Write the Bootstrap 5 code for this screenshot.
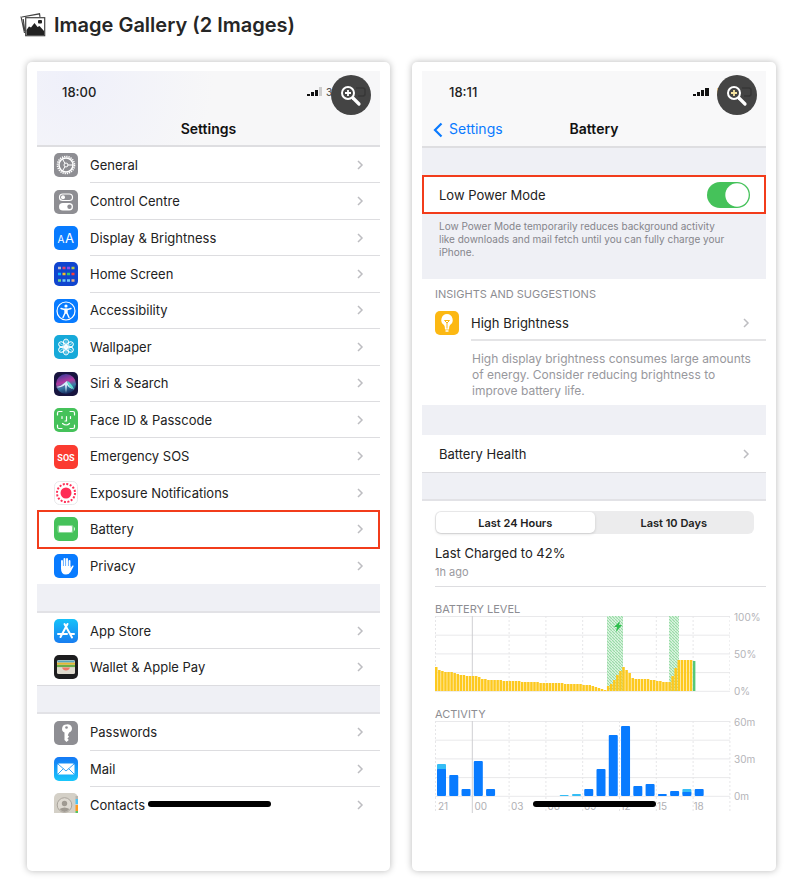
<!DOCTYPE html>
<html lang="en">
<head>
<meta charset="utf-8">
<meta name="viewport" content="width=device-width, initial-scale=1">
<title>Image Gallery</title>
<link href="https://cdn.jsdelivr.net/npm/bootstrap@5.3.0/dist/css/bootstrap.min.css" rel="stylesheet">
<style>
body{font-family:Inter,"Liberation Sans",sans-serif;background:#fff;color:#222}
.gallery-head{padding:8px 20px 0;height:37px}
.gallery-head h1{font-size:20px;line-height:34px;font-weight:600;color:#262626}
.gallery-grid{display:grid;grid-template-columns:1fr 1fr;gap:22px;padding:25px 24px 20px 27px}
.shot{border-radius:5px;background:#fff;box-shadow:0 0 7px rgba(0,0,0,.28);padding:9px 10px 58px}
.phone{font-size:13px;line-height:18px}
.phone-head{height:77px;background:#f8f8f9;border-bottom:2px solid #dedee1}
.phone-head.tinted{height:76px;background:radial-gradient(circle at 10% 10%,#eff0fa,#f7f7f8 45%)}
.status{height:42px;padding:0 52px 0 25px;font-weight:500}
.status.late{padding-left:27px}
.title-row{height:32px;display:grid;grid-template-columns:1fr auto 1fr;font-size:14px;font-weight:600;color:#111}
.title-row a{color:#0a7aff;font-weight:400;text-decoration:none;padding-left:11px}
.zoom-btn{top:4px;right:9px;width:40px;height:40px;background:#444;border:0;padding:0}
.rows{min-height:437px}
.rows.pair{min-height:72px}
.rows.tail{height:99px;min-height:0;overflow:hidden}
.rows.tail .item{flex:0 0 36px}
.rows.tail .item:first-child{flex-basis:37px}
.item{padding-left:17px;color:#222;text-decoration:none;position:relative}
.item .line{margin-left:12px;padding-right:16px;border-bottom:1px solid #dddde0;align-self:stretch}
.item:last-child .line{border-bottom:0}
.app{width:24px;height:24px;flex:none}
.gap-band{background:#eff0f5;height:29px;border-bottom:2px solid #e2e2e6}
.gap-band.top-line{border-top:1px solid #dcdce0}
.gap-band.plain{height:27px;border:0}
.gap-band.tall{height:30px;border:0}
.marked::after{content:"";position:absolute;inset:-1px 0;border:2px solid #f23c1b}
.home-bar{height:6px;width:123px;border-radius:3px;background:#000;bottom:6px;left:111px}
.power{height:39px;border:2px solid #f23c1b;padding:0 14px 0 15px}
.form-switch .form-check-input.power-switch{width:43px;height:26px;margin:0;border:0;background-color:#45c25a;box-shadow:none;
 background-image:url("data:image/svg+xml,%3csvg xmlns='http://www.w3.org/2000/svg' viewBox='-4 -4 8 8'%3e%3ccircle r='3.6' fill='%23fff'/%3e%3c/svg%3e")}
.note{background:#eff0f5;height:65px;padding:6px 17px 0;font-size:10px;line-height:13px;color:#85858b}
.caption-txt{font-size:11px;line-height:14px;color:#8d8d92}
.insight{height:126px;padding:8px 0 0 13px}
.insight .item{padding-left:0;height:40px}
.insight .app{margin-top:4px}
.insight .item .line{padding-top:6px;border-bottom:2px solid #e4e4e6}
.advice{font-size:12px;line-height:16px;color:#98989d;margin:10px 0 0 37px}
.health{height:37px;padding:0 16px 0 17px}
.seg{background:#ececed;border-radius:6px;height:23px;width:calc(100% - 12px);padding:1px}
.seg .btn{font-size:11px;line-height:14px;font-weight:600;padding:0;border:0;border-radius:5px;color:#222}
.seg .btn.active{background:#fff;color:#222;box-shadow:0 1px 3px rgba(0,0,0,.15)}
.usage{padding:10px 0 0 13px;height:312px}
.charged{height:53px;padding-top:10px;border-bottom:1px solid #dddde0}
.ago{font-size:11px;line-height:20px;color:#99999e}
.plot-title{margin-top:15px}
.plot{height:76px}
.plot svg{flex:1 1 0;min-width:0;height:76px}
.scale{width:36px;padding-left:4px;margin:-5px 0;font-size:10px;line-height:12px;color:#b4b4b8}
.hours{display:grid;grid-template-columns:repeat(8,1fr);width:calc(100% - 36px);font-size:10px;line-height:18px;color:#b0b0b4;padding-left:3px}
</style>
</head>
<body>
<header class="gallery-head d-flex">
<svg class="flex-shrink-0 me-2 mt-1" width="26" height="26" viewBox="0 0 26 26" aria-hidden="true"><path d="M4.500 21 1 4.500M2 5l17.500-3.200.5 3M3.200 7l1.600 12" fill="none" stroke="#444" stroke-width="1.200"/><rect x="5.700" y="5.700" width="19" height="18" fill="#fff" stroke="#444" stroke-width="1.200"/><path d="M6.500 23v-5l2.500-3.500 2 1 3.500-4.500 3 4 2-1 4.500 5v4z" fill="#222"/><rect x="18" y="8" width="4" height="3.500" rx="1" fill="#222"/></svg>
<h1 class="m-0">Image Gallery (2 Images)</h1>
</header>
<main class="gallery-grid">
<article class="shot">
<div class="phone position-relative">
<div class="phone-head tinted">
<div class="status d-flex align-items-center justify-content-between"><span>18:00</span><svg class="overflow-visible" width="12" height="10" viewBox="0 0 12 10" aria-hidden="true"><path d="M-9 7h3v2h-3zM-5 5h3v4h-3zM-1 3h3v6h-3z" fill="#111"/><path d="M3 0h3v9H3z" fill="#ccc"/><text x="10" y="9" font-size="10" fill="#555">3G</text></svg></div>
<div class="title-row align-items-center"><span></span><span>Settings</span><span></span></div>
</div>
<nav class="rows d-flex flex-column" aria-label="Settings">
<a href="#" class="item d-flex flex-fill align-items-center"><svg class="app" viewBox="0 0 24 24"><rect width="24" height="24" rx="5" fill="#8e8e93"/><circle cx="12" cy="12" r="8.500" fill="none" stroke="#fff" stroke-width="1.600" stroke-dasharray="1.300 0.925"/><circle cx="12" cy="12" r="7" fill="none" stroke="#fff" stroke-width="1.500"/><circle cx="12" cy="12" r="2" fill="none" stroke="#fff"/><path d="M13.500 12H19M11 10.500 8.500 6M11 13.500 8.500 18" stroke="#fff"/></svg><span class="line d-flex flex-fill align-items-center justify-content-between">General<svg width="7" height="10" viewBox="0 0 7 10"><path d="m1 1 4 4-4 4" fill="none" stroke="#bdbdc1" stroke-width="1.500"/></svg></span></a>
<a href="#" class="item d-flex flex-fill align-items-center"><svg class="app" viewBox="0 0 24 24"><rect width="24" height="24" rx="5" fill="#8e8e93"/><rect x="5.500" y="4" width="13" height="6.500" rx="3.250" fill="none" stroke="#fff" stroke-width="1.200"/><circle cx="9" cy="7.200" r="2" fill="#fff"/><rect x="5" y="13" width="14" height="7.500" rx="3.750" fill="#fff"/><circle cx="15.500" cy="16.700" r="2.200" fill="#8e8e93"/></svg><span class="line d-flex flex-fill align-items-center justify-content-between">Control Centre<svg width="7" height="10" viewBox="0 0 7 10"><path d="m1 1 4 4-4 4" fill="none" stroke="#bdbdc1" stroke-width="1.500"/></svg></span></a>
<a href="#" class="item d-flex flex-fill align-items-center"><svg class="app" viewBox="0 0 24 24"><rect width="24" height="24" rx="5" fill="#087bff"/><text x="3.500" y="17" font-size="10" fill="#fff">A</text><text x="11" y="17" font-size="13" fill="#fff">A</text></svg><span class="line d-flex flex-fill align-items-center justify-content-between">Display &amp; Brightness<svg width="7" height="10" viewBox="0 0 7 10"><path d="m1 1 4 4-4 4" fill="none" stroke="#bdbdc1" stroke-width="1.500"/></svg></span></a>
<a href="#" class="item d-flex flex-fill align-items-center"><svg class="app" viewBox="0 0 24 24"><rect width="24" height="24" rx="5" fill="#1045cf"/><g stroke-width="2.500"><path d="M4 6h3" stroke="#bbc"/><path d="M8.500 6h3" stroke="#e4456c"/><path d="M13 6h3" stroke="#8b50e8"/><path d="M17.500 6h3" stroke="#b2c84a"/><path d="M4 12h3" stroke="#12b6fa"/><path d="M8.500 12h3" stroke="#f7bd22"/><path d="M13 12h3" stroke="#35c977"/><path d="M17.500 12h3" stroke="#ff3d38"/><path d="M4 18.500h3" stroke="#71d787"/><path d="M8.500 18.500h3M13 18.500h3" stroke="#72c9f8"/><path d="M17.500 18.500h3" stroke="#e7b086"/></g></svg><span class="line d-flex flex-fill align-items-center justify-content-between">Home Screen<svg width="7" height="10" viewBox="0 0 7 10"><path d="m1 1 4 4-4 4" fill="none" stroke="#bdbdc1" stroke-width="1.500"/></svg></span></a>
<a href="#" class="item d-flex flex-fill align-items-center"><svg class="app" viewBox="0 0 24 24"><rect width="24" height="24" rx="5" fill="#087bff"/><circle cx="12" cy="12" r="9" fill="none" stroke="#fff" stroke-width="1.200"/><circle cx="12" cy="7" r="1.600" fill="#fff"/><path d="M7 9.500l3.500 1h3l3.500-1M11 10v4l-2 4.500M13 10v4l2 4.500M12 10v4" fill="none" stroke="#fff" stroke-width="1.400" stroke-linecap="round"/></svg><span class="line d-flex flex-fill align-items-center justify-content-between">Accessibility<svg width="7" height="10" viewBox="0 0 7 10"><path d="m1 1 4 4-4 4" fill="none" stroke="#bdbdc1" stroke-width="1.500"/></svg></span></a>
<a href="#" class="item d-flex flex-fill align-items-center"><svg class="app" viewBox="0 0 24 24"><rect width="24" height="24" rx="5" fill="#16a9d9"/><g fill="none" stroke="#fff"><ellipse cx="12" cy="7.500" rx="2.600" ry="3.500"/><ellipse cx="12" cy="7.500" rx="2.600" ry="3.500" transform="rotate(60 12 12)"/><ellipse cx="12" cy="7.500" rx="2.600" ry="3.500" transform="rotate(120 12 12)"/><ellipse cx="12" cy="7.500" rx="2.600" ry="3.500" transform="rotate(180 12 12)"/><ellipse cx="12" cy="7.500" rx="2.600" ry="3.500" transform="rotate(240 12 12)"/><ellipse cx="12" cy="7.500" rx="2.600" ry="3.500" transform="rotate(300 12 12)"/><circle cx="12" cy="12" r="1.500"/><path d="M12 5v14M6 8.500l12 7M6 15.500l12-7" stroke-width=".6"/></g></svg><span class="line d-flex flex-fill align-items-center justify-content-between">Wallpaper<svg width="7" height="10" viewBox="0 0 7 10"><path d="m1 1 4 4-4 4" fill="none" stroke="#bdbdc1" stroke-width="1.500"/></svg></span></a>
<a href="#" class="item d-flex flex-fill align-items-center"><svg class="app" viewBox="0 0 24 24"><defs><linearGradient id="orb" x1=".3" y1="0" x2=".6" y2="1"><stop stop-color="#3c3b9c"/><stop offset=".4" stop-color="#b43aa0"/><stop offset=".65" stop-color="#387ba5"/><stop offset="1" stop-color="#122055"/></linearGradient></defs><rect width="24" height="24" rx="5" fill="#17143f"/><circle cx="12" cy="12" r="10" fill="url(#orb)"/><path d="M2 15c5 0 8-4 11-6 1 4 4 8 9 9-4-1-7-2-9-5l-1 8-1-8c-3 2-6 3-9 2z" fill="#d6eefa"/><path d="M13 9c3 1 5 4 7 8-4-1-6-4-7-8z" fill="#5de0d1"/></svg><span class="line d-flex flex-fill align-items-center justify-content-between">Siri &amp; Search<svg width="7" height="10" viewBox="0 0 7 10"><path d="m1 1 4 4-4 4" fill="none" stroke="#bdbdc1" stroke-width="1.500"/></svg></span></a>
<a href="#" class="item d-flex flex-fill align-items-center"><svg class="app" viewBox="0 0 24 24"><rect width="24" height="24" rx="5" fill="#45c25a"/><path d="M3.500 7V5q0-1.500 1.500-1.500h3M16 3.500h3q1.500 0 1.500 1.500v2M20.500 17v2q0 1.500-1.500 1.500h-3M8 20.500H5q-1.500 0-1.500-1.500v-2M8 8.500v2M16.500 8.500v2M12.500 8.500v4.500h-1.500M8.500 15.500q4 3 7 0" fill="none" stroke="#fff" stroke-width="1.200" stroke-linecap="round"/></svg><span class="line d-flex flex-fill align-items-center justify-content-between">Face ID &amp; Passcode<svg width="7" height="10" viewBox="0 0 7 10"><path d="m1 1 4 4-4 4" fill="none" stroke="#bdbdc1" stroke-width="1.500"/></svg></span></a>
<a href="#" class="item d-flex flex-fill align-items-center"><svg class="app" viewBox="0 0 24 24"><rect width="24" height="24" rx="5" fill="#fb3b30"/><text x="12" y="15.500" text-anchor="middle" font-family="Roboto" font-size="9" font-weight="700" fill="#fff">SOS</text></svg><span class="line d-flex flex-fill align-items-center justify-content-between">Emergency SOS<svg width="7" height="10" viewBox="0 0 7 10"><path d="m1 1 4 4-4 4" fill="none" stroke="#bdbdc1" stroke-width="1.500"/></svg></span></a>
<a href="#" class="item d-flex flex-fill align-items-center"><svg class="app" viewBox="0 0 24 24"><rect x=".5" y=".5" width="23" height="23" rx="5" fill="#fff" stroke="#e8e8ea"/><circle cx="12" cy="12" r="5.500" fill="#ff2d55"/><circle cx="12" cy="12" r="9" fill="none" stroke="#ff2d55" stroke-width="2" stroke-dasharray="2 1.534"/></svg><span class="line d-flex flex-fill align-items-center justify-content-between">Exposure Notifications<svg width="7" height="10" viewBox="0 0 7 10"><path d="m1 1 4 4-4 4" fill="none" stroke="#bdbdc1" stroke-width="1.500"/></svg></span></a>
<a href="#" class="item marked d-flex flex-fill align-items-center"><svg class="app" viewBox="0 0 24 24"><rect width="24" height="24" rx="5" fill="#45c25a"/><rect x="3.500" y="8" width="16" height="8" rx="2" fill="#8bd998"/><rect x="5" y="9" width="13" height="6" rx="1" fill="#fff"/><path d="M20.500 10.500v3" stroke="#d0f0d5"/></svg><span class="line d-flex flex-fill align-items-center justify-content-between">Battery<svg width="7" height="10" viewBox="0 0 7 10"><path d="m1 1 4 4-4 4" fill="none" stroke="#bdbdc1" stroke-width="1.500"/></svg></span></a>
<a href="#" class="item d-flex flex-fill align-items-center"><svg class="app" viewBox="0 0 24 24"><rect width="24" height="24" rx="5" fill="#087bff"/><path d="M8 13V7M10.500 12V5M13 12V5M15.500 13V7" stroke="#fff" stroke-width="1.900" stroke-linecap="round"/><path d="M7 12h9.500v2l2-2.500q1.500-.5 1 1L16.500 18q-1.500 2.500-4.500 2.500-5 0-5-6z" fill="#fff"/></svg><span class="line d-flex flex-fill align-items-center justify-content-between">Privacy<svg width="7" height="10" viewBox="0 0 7 10"><path d="m1 1 4 4-4 4" fill="none" stroke="#bdbdc1" stroke-width="1.500"/></svg></span></a>
</nav>
<div class="gap-band"></div>
<nav class="rows pair d-flex flex-column" aria-label="Stores">
<a href="#" class="item d-flex flex-fill align-items-center"><svg class="app" viewBox="0 0 24 24"><defs><linearGradient id="sky" x2="0" y2="1"><stop stop-color="#16c2fa"/><stop offset="1" stop-color="#187df0"/></linearGradient></defs><rect width="24" height="24" rx="5" fill="url(#sky)"/><path d="M13.500 5 6.500 18M10.500 5l7.500 13.500M4 15h9M16 15h4" fill="none" stroke="#fff" stroke-width="2" stroke-linecap="round"/></svg><span class="line d-flex flex-fill align-items-center justify-content-between">App Store<svg width="7" height="10" viewBox="0 0 7 10"><path d="m1 1 4 4-4 4" fill="none" stroke="#bdbdc1" stroke-width="1.500"/></svg></span></a>
<a href="#" class="item d-flex flex-fill align-items-center"><svg class="app" viewBox="0 0 24 24"><rect width="24" height="24" rx="5" fill="#1d1d1f"/><rect x="3" y="5" width="18" height="14" rx="1.500" fill="#dedace"/><path d="M3.500 6.500h17" stroke="#58a7bd" stroke-width="2"/><path d="M3 8.700h18" stroke="#e4b734" stroke-width="2"/><path d="M3 11h18" stroke="#69ad4b" stroke-width="2.200"/><path d="M8 12.500h8q-1 3-4 3t-4-3z" fill="#ee7767"/></svg><span class="line d-flex flex-fill align-items-center justify-content-between">Wallet &amp; Apple Pay<svg width="7" height="10" viewBox="0 0 7 10"><path d="m1 1 4 4-4 4" fill="none" stroke="#bdbdc1" stroke-width="1.500"/></svg></span></a>
</nav>
<div class="gap-band top-line"></div>
<nav class="rows tail d-flex flex-column" aria-label="Accounts">
<a href="#" class="item d-flex align-items-center"><svg class="app" viewBox="0 0 24 24"><rect width="24" height="24" rx="5" fill="#8e8e93"/><path d="M12.500 3.500a4.200 4.200 0 0 0-2 8v7.500l2 2 2.300-2-1.400-1.500 1.700-1.700-1.300-1.500 1.300-2.800a4.200 4.200 0 0 0-2.600-8z" fill="#fff"/><circle cx="12.500" cy="6.500" r="1.300" fill="#8e8e93"/></svg><span class="line d-flex flex-fill align-items-center justify-content-between">Passwords<svg width="7" height="10" viewBox="0 0 7 10"><path d="m1 1 4 4-4 4" fill="none" stroke="#bdbdc1" stroke-width="1.500"/></svg></span></a>
<a href="#" class="item d-flex align-items-center"><svg class="app" viewBox="0 0 24 24"><defs><linearGradient id="post" x2="0" y2="1"><stop stop-color="#1478f5"/><stop offset="1" stop-color="#19c7fb"/></linearGradient></defs><rect width="24" height="24" rx="5" fill="url(#post)"/><rect x="3.500" y="6.500" width="17" height="11" rx="1.500" fill="#fff"/><path d="m4 7 8 7 8-7M4 17l5.500-5.500M20 17l-5.500-5.500" fill="none" stroke="#38a5f6"/></svg><span class="line d-flex flex-fill align-items-center justify-content-between">Mail<svg width="7" height="10" viewBox="0 0 7 10"><path d="m1 1 4 4-4 4" fill="none" stroke="#bdbdc1" stroke-width="1.500"/></svg></span></a>
<a href="#" class="item d-flex align-items-center"><svg class="app" viewBox="0 0 24 24"><rect width="24" height="24" rx="5" fill="#d4d0c7"/><path d="M21.500 3h2.500v3h-2.500z" fill="#b8b5ae"/><path d="M21.500 6H24v5h-2.500z" fill="#4cc4f5"/><path d="M21.500 12H24v6h-2.500z" fill="#ff9a21"/><path d="M21.500 18H24v3h-2.500z" fill="#5ac45f"/><circle cx="10.500" cy="12" r="7.300" fill="#dedad2" stroke="#aaa59d"/><circle cx="10.500" cy="10.500" r="2.700" fill="#9f9a92"/><path d="M5.500 16q5-3 10 0-5 6-10 0z" fill="#9f9a92"/></svg><span class="line d-flex flex-fill align-items-center justify-content-between">Contacts<svg width="7" height="10" viewBox="0 0 7 10"><path d="m1 1 4 4-4 4" fill="none" stroke="#bdbdc1" stroke-width="1.500"/></svg></span></a>
</nav>
<div class="home-bar position-absolute"></div>
<button type="button" class="zoom-btn rounded-circle position-absolute" aria-label="Enlarge settings picture"><svg width="40" height="40" viewBox="0 0 40 40"><path d="M25 13h7q2 0 2 2v4q0 2-2 2h-5" fill="none" stroke="#373737" stroke-width="1.500"/><circle cx="17" cy="18" r="6" fill="none" stroke="#fff" stroke-width="2"/><path d="m22 23 6 6" stroke="#fff" stroke-width="3.200" stroke-linecap="round"/><path d="M17 15v6M14 18h6" stroke="#fff" stroke-width="1.800"/></svg></button>
</div>
</article>
<article class="shot">
<div class="phone position-relative">
<div class="phone-head">
<div class="status late d-flex align-items-center justify-content-between"><span>18:11</span><svg class="overflow-visible" width="12" height="10" viewBox="0 0 12 10" aria-hidden="true"><path d="M-9 7h3v2h-3zM-5 5h3v4h-3zM-1 3h3v6h-3zM3 1h4v8H3z" fill="#111"/><text x="15" y="9" font-size="10" fill="#333">E</text></svg></div>
<div class="title-row align-items-center"><a href="#"><svg class="me-1" width="12" height="16" viewBox="0 0 12 16"><path d="M8.500 1.500 2 8l6.500 6.500" fill="none" stroke="#0a7aff" stroke-width="2.200"/></svg>Settings</a><span>Battery</span><span></span></div>
</div>
<div class="gap-band plain"></div>
<div class="power d-flex align-items-center justify-content-between"><label for="lpm">Low Power Mode</label><div class="form-check form-switch m-0 p-0 d-flex"><input class="form-check-input power-switch" type="checkbox" role="switch" id="lpm" checked></div></div>
<p class="note m-0">Low Power Mode temporarily reduces background activity<br>like downloads and mail fetch until you can fully charge your<br>iPhone.</p>
<section class="insight">
<div class="caption-txt">INSIGHTS AND SUGGESTIONS</div>
<div><a href="#" class="item d-flex align-items-center"><svg class="app" viewBox="0 0 24 24"><rect width="24" height="24" rx="5" fill="#fcb813"/><path d="M12 3a6 6 0 0 1 3 11q-1 1-1 4.500h-4Q10 15 9 14a6 6 0 0 1 3-11z" fill="#fff"/><path d="M10.500 20h3" stroke="#fff" stroke-width="1.500"/><path d="M9.500 9.500h5L12 12zm2.500 2v6" fill="none" stroke="#fcb813"/></svg><span class="line d-flex flex-fill align-items-center justify-content-between">High Brightness<svg width="7" height="10" viewBox="0 0 7 10"><path d="m1 1 4 4-4 4" fill="none" stroke="#bdbdc1" stroke-width="1.500"/></svg></span></a>
<p class="advice">High display brightness consumes large amounts<br>of energy. Consider reducing brightness to<br>improve battery life.</p></div>
</section>
<div class="gap-band tall"></div>
<a href="#" class="health d-flex align-items-center justify-content-between text-reset text-decoration-none">Battery Health<svg width="7" height="10" viewBox="0 0 7 10"><path d="m1 1 4 4-4 4" fill="none" stroke="#bdbdc1" stroke-width="1.500"/></svg></a>
<div class="gap-band top-line"></div>
<section class="usage">
<div class="seg d-flex" role="group" aria-label="Period"><button type="button" class="btn active flex-fill w-50">Last 24 Hours</button><button type="button" class="btn flex-fill w-50">Last 10 Days</button></div>
<div class="charged"><div>Last Charged to 42%</div><div class="ago">1h ago</div></div>
<div class="caption-txt plot-title">BATTERY LEVEL</div>
<div class="plot d-flex"><svg id="level" viewBox="0 0 295 76" preserveAspectRatio="none" role="img" aria-label="Battery level"></svg><div class="scale d-flex flex-column justify-content-between"><span>100%</span><span>50%</span><span>0%</span></div></div>
<div class="caption-txt plot-title">ACTIVITY</div>
<div class="plot d-flex"><svg id="activity" class="overflow-visible" viewBox="0 0 295 76" preserveAspectRatio="none" role="img" aria-label="Activity"></svg><div class="scale d-flex flex-column justify-content-between"><span>60m</span><span>30m</span><span>0m</span></div></div>
<div class="hours"><span>21</span><span>00</span><span>03</span><span>06</span><span>09</span><span>12</span><span>15</span><span>18</span></div>
</section>
<div class="home-bar position-absolute"></div>
<button type="button" class="zoom-btn rounded-circle position-absolute" aria-label="Enlarge battery picture"><svg width="40" height="40" viewBox="0 0 40 40"><path d="M25 13h7q2 0 2 2v4q0 2-2 2h-5" fill="none" stroke="#373737" stroke-width="1.500"/><circle cx="17" cy="18" r="6" fill="none" stroke="#fff" stroke-width="2"/><path d="m22 23 6 6" stroke="#fff" stroke-width="3.200" stroke-linecap="round"/><path d="M17 15v6M14 18h6" stroke="#f5e3a0" stroke-width="1.800"/></svg></button>
</div>
</article>
</main>
<script src="https://cdn.jsdelivr.net/npm/bootstrap@5.3.0/dist/js/bootstrap.bundle.min.js"></script>
<script>
function rect(x, y, w, h, fill, r) { return '<rect x="' + x + '" y="' + y + '" width="' + w + '" height="' + h + '" fill="' + fill + '" rx="' + (r || 0) + '"/>'; }
function grid(drop) {
  let s = '';
  for (let i = 0; i < 5; i++) s += '<path d="M0 ' + (0.5 + i * 18.7) + 'H295" stroke="#e9e9eb"/>';
  for (let i = 0; i < 9; i++) s += '<path d="M' + (i * 36.8 + 0.5) + ' 0v' + (75 + drop) + '" stroke="' + (i === 1 ? '#cfcfd2' : '#e6e6e8') + '"' + (i === 1 ? '' : ' stroke-dasharray="2 2"') + '/>';
  return s;
}
const level = [24,21,20,19,19,19,18,17,16,16,15,15,15,15,14,12,12,11,11,11,11,11,10,10,10,10,10,10,9,9,9,9,9,9,8,8,8,8,8,8,8,8,7,7,7,7,7,7,6,6,6,5,4,3,2,1,5,7,11,16,20,24,21,18,13,12,12,12,12,12,11,11,10,10,9,9,9,15,23,31,31,31,31,31,30];
let out = '<defs><pattern id="hatch" width="3" height="3" patternUnits="userSpaceOnUse"><rect width="3" height="3" fill="#def5e3"/><path d="M0 0l3 3" stroke="#98dba6" stroke-width="1.200"/></pattern></defs>' + grid(0);
out += rect(172, 0, 16, 75, 'url(#hatch)') + rect(234, 0, 10, 75, 'url(#hatch)');
level.forEach((h, i) => out += rect((i * 3.07).toFixed(2), 75 - h, 2.5, h, i === 84 ? '#55c878' : '#fdc91f'));
out += '<path d="m185 5-6 6h3l-1 5 6-7h-3z" fill="#2fbf4e"/>';
document.getElementById('level').innerHTML = out;
const activity = [[27,5],[21,0],[7,0],[35,0],[7,0],[0,0],[0,0],[0,0],[0,0],[0,0],[0,1],[0,2],[7,0],[27,0],[61,0],[70,0],[10,0],[12,0],[2,0],[5,0],[4,3],[7,0]];
out = grid(17);
activity.forEach(([b, c], i) => {
  const x = (2 + i * 12.27).toFixed(2);
  if (c) out += rect(x, 75 - b - c, 9, c + (b ? 2 : 0), '#35bdf5', 1);
  if (b) out += rect(x, 75 - b, 9, b, '#087bff', 1);
});
document.getElementById('activity').innerHTML = out;
</script>
</body>
</html>
